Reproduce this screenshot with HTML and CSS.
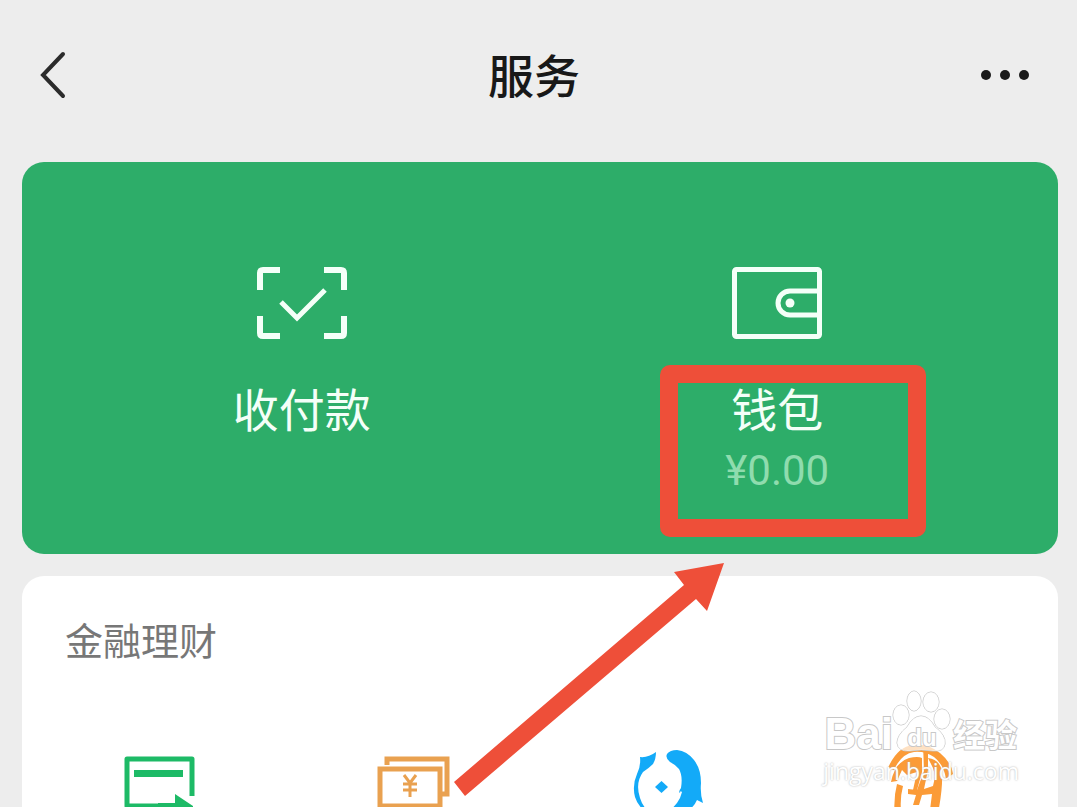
FILE: index.html
```html
<!DOCTYPE html>
<html lang="zh-CN">
<head>
	<meta charset="utf-8">
	<meta name="viewport" content="width=device-width, initial-scale=1">
	<title>服务</title>
	<link rel="stylesheet" href="styles.css">
</head>
<body>
<div class="page">
	<header class="topbar">
		<button class="back" type="button" aria-label="返回">
			<svg width="28" height="48" viewBox="0 0 28 48"><path d="M25 3L5 24L25 45" fill="none" stroke="#2b2b2b" stroke-width="4" stroke-linecap="round"/></svg>
		</button>
		<h1>服务</h1>
		<button class="more" type="button" aria-label="更多">
			<svg width="50" height="12" viewBox="0 0 50 12" fill="#1a1a1a"><circle cx="6" cy="6" r="5"/><circle cx="25" cy="6" r="5"/><circle cx="44" cy="6" r="5"/></svg>
		</button>
	</header>

	<main>
		<section class="panel">
			<a class="pay" href="#">
				<svg width="90" height="72" viewBox="0 0 90 72" fill="none" stroke="#f4fff8" stroke-width="6">
					<path d="M3 23V6Q3 3 6 3H23M67 3H84Q87 3 87 6V23M87 49V66Q87 69 84 69H67M23 69H6Q3 69 3 66V49"/>
					<path d="M24 35L40 51L68 23" stroke-width="5"/>
				</svg>
				<span class="name">收付款</span>
			</a>
			<a class="pay" href="#">
				<svg width="90" height="72" viewBox="0 0 90 72" fill="none" stroke="#f4fff8" stroke-width="5">
					<rect x="2.5" y="2.5" width="85" height="67" rx="2"/>
					<path d="M87 24H58A12 12 0 0 0 58 48H87"/>
					<circle cx="58" cy="36" r="4.5" fill="#f4fff8" stroke="none"/>
				</svg>
				<span class="name">钱包</span>
				<span class="money">¥0.00</span>
				<i class="mark"></i>
			</a>
		</section>

		<section class="card">
			<h2>金融理财</h2>
			<ul class="list">
				<li><a href="#" aria-label="信用卡还款">
					<svg width="72" height="70" viewBox="0 0 72 70">
						<path d="M38 50H3V3H68V40" fill="none" stroke="#1dba66" stroke-width="5" stroke-linejoin="round"/>
						<path d="M10 14H59V21H10zM51 38L69 50V53H34V47H51z" fill="#1dba66"/>
					</svg>
				</a></li>
				<li><a href="#" aria-label="微粒贷借钱">
					<svg width="74" height="70" viewBox="0 0 74 70" fill="none" stroke="#e9a150" stroke-width="5">
						<path d="M11 9V3H71V38H66"/>
						<rect x="4" y="13" width="60" height="37"/>
						<path d="M28 19L34 27L40 19M34 27V41M27 28H41M27 34H41" stroke-width="3"/>
					</svg>
				</a></li>
				<li><a href="#" aria-label="理财通">
					<svg width="70" height="70" viewBox="0 0 70 70" fill="#13aaf8">
						<path d="M8 1Q16 2 24 -4Q24 3 21 8Q17 12 11 16Q3 27 8 42Q11 52 20 58Q7 54 3 41Q0 29 5 18Q9 10 8 1z"/>
						<path d="M35 -2Q38 -6 45 -6Q55 -5 62 4Q69 13 69 27Q68 38 71 47L65 44Q60 56 42 60Q36 59 33 57Q43 52 48 42L50 36Q48 34 48 37Q46 36 49 32Q51 20 47 13Q44 9 38 6Q33 2 35 -2z"/>
						<path d="M29.500 25L36 31L29.500 37L23 31z"/>
					</svg>
				</a></li>
				<li><a href="#" aria-label="保险服务">
					<svg width="70" height="70" viewBox="0 0 70 70" fill="#fb9b37">
						<path d="M3 12Q12 -9 28 -11Q43 -13 55 -3Q67 7 68 18L61 23Q59 9 49 1Q40 -5 29 -4Q16 -2 9 14z"/>
						<path d="M6 26Q10 6 24 2Q33 0 37 2V16L32 34H28L32 16L22 19L17 14L12 25z"/>
						<path d="M43 2Q56 4 57 17Q58 34 52 62H44L47 38L37 39L34 49H28L31 39L23 38V33L32 34L39 15L38 -12H43V14L39 33L48 30Q51 20 48 12z"/>
						<path d="M12 28L18 30Q14 45 17 62H10Q8 43 12 28z"/>
					</svg>
				</a></li>
			</ul>
		</section>
	</main>

	<svg class="arrow" width="270" height="235" viewBox="0 0 270 235"><path d="M0 219L230 22L220 9L270 0L253 48L242 36L11 233z" fill="#ee4f39"/></svg>

	<div class="watermark">
		<div class="brand">
			<span>Bai</span>
			<span class="paw">
				<svg width="58" height="62" viewBox="0 0 58 62" fill="#fff" fill-opacity=".7" stroke="#c4c4c4">
					<ellipse cx="8" cy="24" rx="8" ry="10"/><ellipse cx="21" cy="10" rx="7" ry="10"/><ellipse cx="38" cy="11" rx="8" ry="10"/><ellipse cx="49" cy="28" rx="8" ry="10"/>
					<path d="M28 25Q36 25 42 36Q53 44 52 53Q51 61 40 60Q28 58 17 60Q5 61 4 52Q4 44 14 36Q20 25 28 25z"/>
				</svg>
				<b>du</b>
			</span>
			<span class="cn">经验</span>
		</div>
		<div class="site">jingyan.baidu.com</div>
	</div>
</div>
</body>
</html>
```
FILE: styles.css
```css
body,h1,h2,ul,li{margin:0;padding:0;}
ul{list-style-type:none;}
a{color:inherit;text-decoration:none;}
svg{display:block;overflow:visible;}
body{background:#ededed;font-family:"Liberation Sans","Noto Sans CJK SC",sans-serif;}
.page{position:relative;display:flex;flex-direction:column;height:100vh;overflow:hidden;}

.topbar{display:flex;align-items:center;justify-content:space-between;padding:39px 47px 51px 38px;}
.topbar h1{padding-bottom:4px;font:500 46px/68px "Noto Sans CJK SC",sans-serif;color:#181818;}
.topbar button{display:flex;width:52px;padding:0;border:0;background:none;cursor:pointer;}
.topbar .more{justify-content:flex-end;}

main{display:flex;flex:1;flex-direction:column;gap:22px;padding:0 19px 0 22px;}
.panel{display:flex;padding:0 43px 0 42px;border-radius:22px;background:#2dad69;}
.pay{position:relative;display:flex;flex:1;flex-direction:column;align-items:center;box-sizing:border-box;min-height:392px;padding-top:105px;color:#f4fff8;}
.name{margin-top:38px;font:400 46px/60px "Noto Sans CJK SC",sans-serif;}
.money{font:400 42px/68px Roboto,sans-serif;color:#8fdcae;}
.mark{position:absolute;top:203px;left:50%;box-sizing:border-box;width:266px;height:172px;margin-left:-117px;border:18px solid #ee4f39;border-radius:10px;}

.card{flex:1;padding:38px 11px 0;border-radius:22px 22px 0 0;background:#fff;}
.card h2{padding-left:32px;font:400 38px/50px "Noto Sans CJK SC",sans-serif;color:#777;}
.list{display:grid;grid-template-columns:repeat(4,1fr);padding-top:92px;}
.list a{display:flex;justify-content:center;}

.arrow{position:absolute;top:563px;left:454px;}

.watermark{position:absolute;right:58px;bottom:22px;color:#fff;}
.brand{display:flex;align-items:flex-end;justify-content:flex-end;height:64px;padding:0 2px 4px 0;font:700 44px/38px "Liberation Sans",sans-serif;-webkit-text-stroke:2px #c8c8c8;paint-order:stroke fill;}
.paw{position:relative;}
.paw b{position:absolute;left:0;right:0;bottom:0;font-size:24px;line-height:30px;text-align:center;}
.brand .cn{margin-left:2px;font:700 32px/40px "Noto Sans CJK SC",sans-serif;}
.site{font:400 23px/28px "Open Sans",sans-serif;text-align:right;text-shadow:0 0 2px #aaa;}
```
